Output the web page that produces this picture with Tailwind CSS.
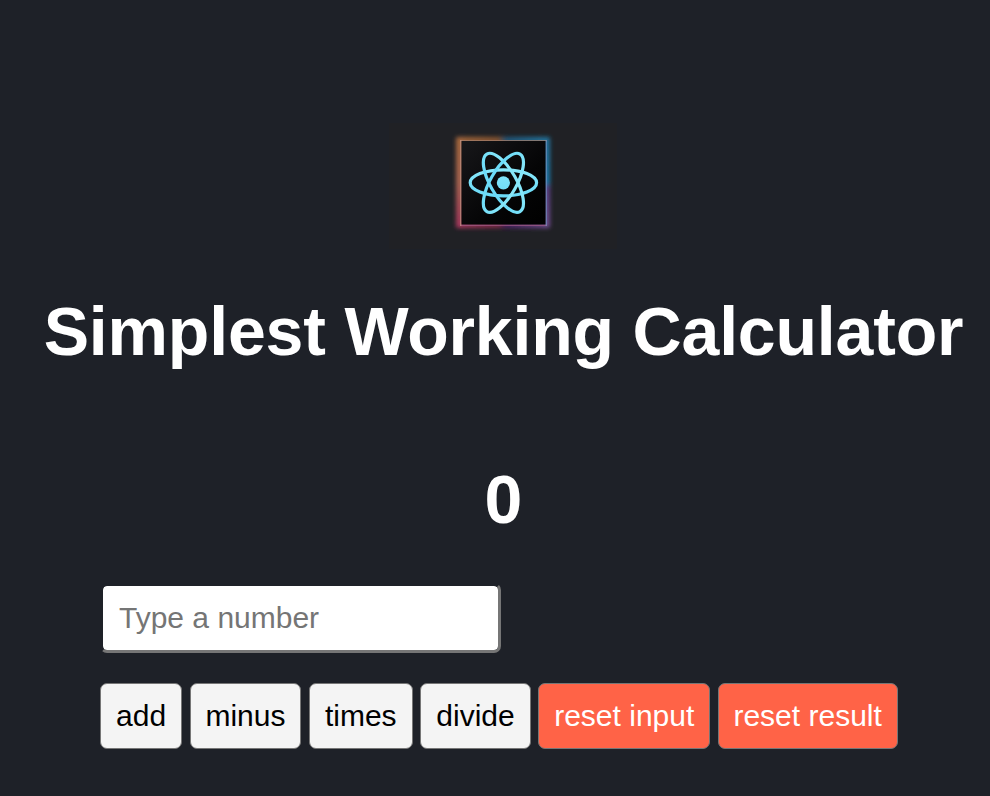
<!DOCTYPE html>
<html lang="en">
<head>
<meta charset="utf-8">
<title>Simplest Working Calculator</title>
<script src="https://cdn.jsdelivr.net/npm/@tailwindcss/browser@4"></script>
</head>
<body class="h-screen overflow-hidden bg-[#1e2128] font-['Liberation_Sans',Arial,sans-serif] text-white">
<main class="flex w-[1007px] flex-col items-center pt-[123px]">
  <svg class="mr-px h-[126px] w-[228px]" viewBox="0 0 228 126" role="img" aria-label="React">
    <defs>
      <filter id="glow" x="-20%" y="-20%" width="140%" height="140%"><feGaussianBlur stdDeviation="2.3"/></filter>
      <filter id="edge" x="-20%" y="-20%" width="140%" height="140%"><feGaussianBlur stdDeviation="0.5"/></filter>
      <linearGradient id="left" x1="0" y1="0" x2="0" y2="1"><stop offset="0" stop-color="#a5673c"/><stop offset=".5" stop-color="#a86450"/><stop offset="1" stop-color="#a5365c"/></linearGradient>
      <linearGradient id="right" x1="0" y1="0" x2="0" y2="1"><stop offset="0" stop-color="#236f98"/><stop offset=".5" stop-color="#1d77a9"/><stop offset=".56" stop-color="#5b4187"/><stop offset="1" stop-color="#704c8d"/></linearGradient>
      <linearGradient id="top"><stop offset="0" stop-color="#a5673c"/><stop offset=".45" stop-color="#87552f"/><stop offset=".53" stop-color="#20567a"/><stop offset="1" stop-color="#2679a3"/></linearGradient>
      <linearGradient id="bottom"><stop offset="0" stop-color="#a5365c"/><stop offset=".45" stop-color="#7d2845"/><stop offset=".53" stop-color="#492062"/><stop offset="1" stop-color="#704c8d"/></linearGradient>
      <linearGradient id="tile" x1="0" y1="0" x2="1" y2="1"><stop offset="0" stop-color="#17171a"/><stop offset=".6" stop-color="#050506"/><stop offset="1" stop-color="#000"/></linearGradient>
      <linearGradient id="atom" gradientUnits="userSpaceOnUse" x1="0" y1="-31" x2="0" y2="31"><stop offset="0" stop-color="#9af0fc"/><stop offset="1" stop-color="#58d2f6"/></linearGradient>
    </defs>
    <rect width="228" height="126" fill="#202125"/>
    <g filter="url(#glow)">
      <rect x="68" y="14" width="92" height="6" fill="url(#top)"/>
      <rect x="68" y="99" width="92" height="6" fill="url(#bottom)"/>
      <rect x="67" y="14.500" width="7.500" height="90" fill="url(#left)"/>
      <rect x="153.500" y="14.500" width="7.500" height="90" fill="url(#right)"/>
    </g>
    <g filter="url(#edge)">
      <rect x="71" y="17" width="87" height="1.500" fill="#a9826d" opacity=".7"/>
      <rect x="71" y="101.500" width="87" height="1.500" fill="#a35b86" opacity=".7"/>
      <rect x="71" y="17" width="1.500" height="86" fill="#c09080" opacity=".7"/>
      <rect x="156.500" y="17" width="1.500" height="86" fill="#718fbd" opacity=".7"/>
    </g>
    <rect x="72.500" y="18" width="84" height="83.500" fill="url(#tile)"/>
    <g transform="translate(114.400 59.800)">
      <g fill="none" stroke="url(#atom)" stroke-width="3.200">
        <ellipse rx="33.200" ry="13"/>
        <ellipse rx="33.200" ry="13" transform="rotate(60)"/>
        <ellipse rx="33.200" ry="13" transform="rotate(120)"/>
      </g>
      <circle r="6.600" fill="url(#atom)"/>
    </g>
  </svg>
  <h1 class="mt-[43px] text-center text-[68px] leading-[78px] font-bold tracking-[-0.18px] whitespace-nowrap">Simplest Working Calculator</h1>
  <p class="mt-[90px] text-[68px] leading-[78px] font-bold">0</p>
  <form class="mt-[45px] w-[807px]" onsubmit="return false">
    <input type="text" placeholder="Type a number" class="block h-[70px] w-[401px] rounded-[7px] border-[3px] border-t-[#1e2128] border-r-[#767676] border-b-[#767676] border-l-[#1e2128] bg-white bg-clip-padding px-4 text-[30px] text-black placeholder:text-[#757575]">
    <div class="mt-[30px] flex gap-[7.4px] text-[30px] leading-[34px] whitespace-nowrap">
      <button class="h-[66px] w-[82.200px] rounded-[7px] border border-[#767676] bg-[#f4f4f4] text-black">add</button>
      <button class="h-[66px] w-[111.800px] rounded-[7px] border border-[#767676] bg-[#f4f4f4] text-black">minus</button>
      <button class="h-[66px] w-[104px] rounded-[7px] border border-[#767676] bg-[#f4f4f4] text-black">times</button>
      <button class="h-[66px] w-[110.700px] rounded-[7px] border border-[#767676] bg-[#f4f4f4] text-black">divide</button>
      <button class="h-[66px] w-[172px] rounded-[7px] border border-[#767676] bg-[#ff6347]">reset input</button>
      <button class="h-[66px] w-[180px] rounded-[7px] border border-[#767676] bg-[#ff6347]">reset result</button>
    </div>
  </form>
</main>
</body>
</html>
